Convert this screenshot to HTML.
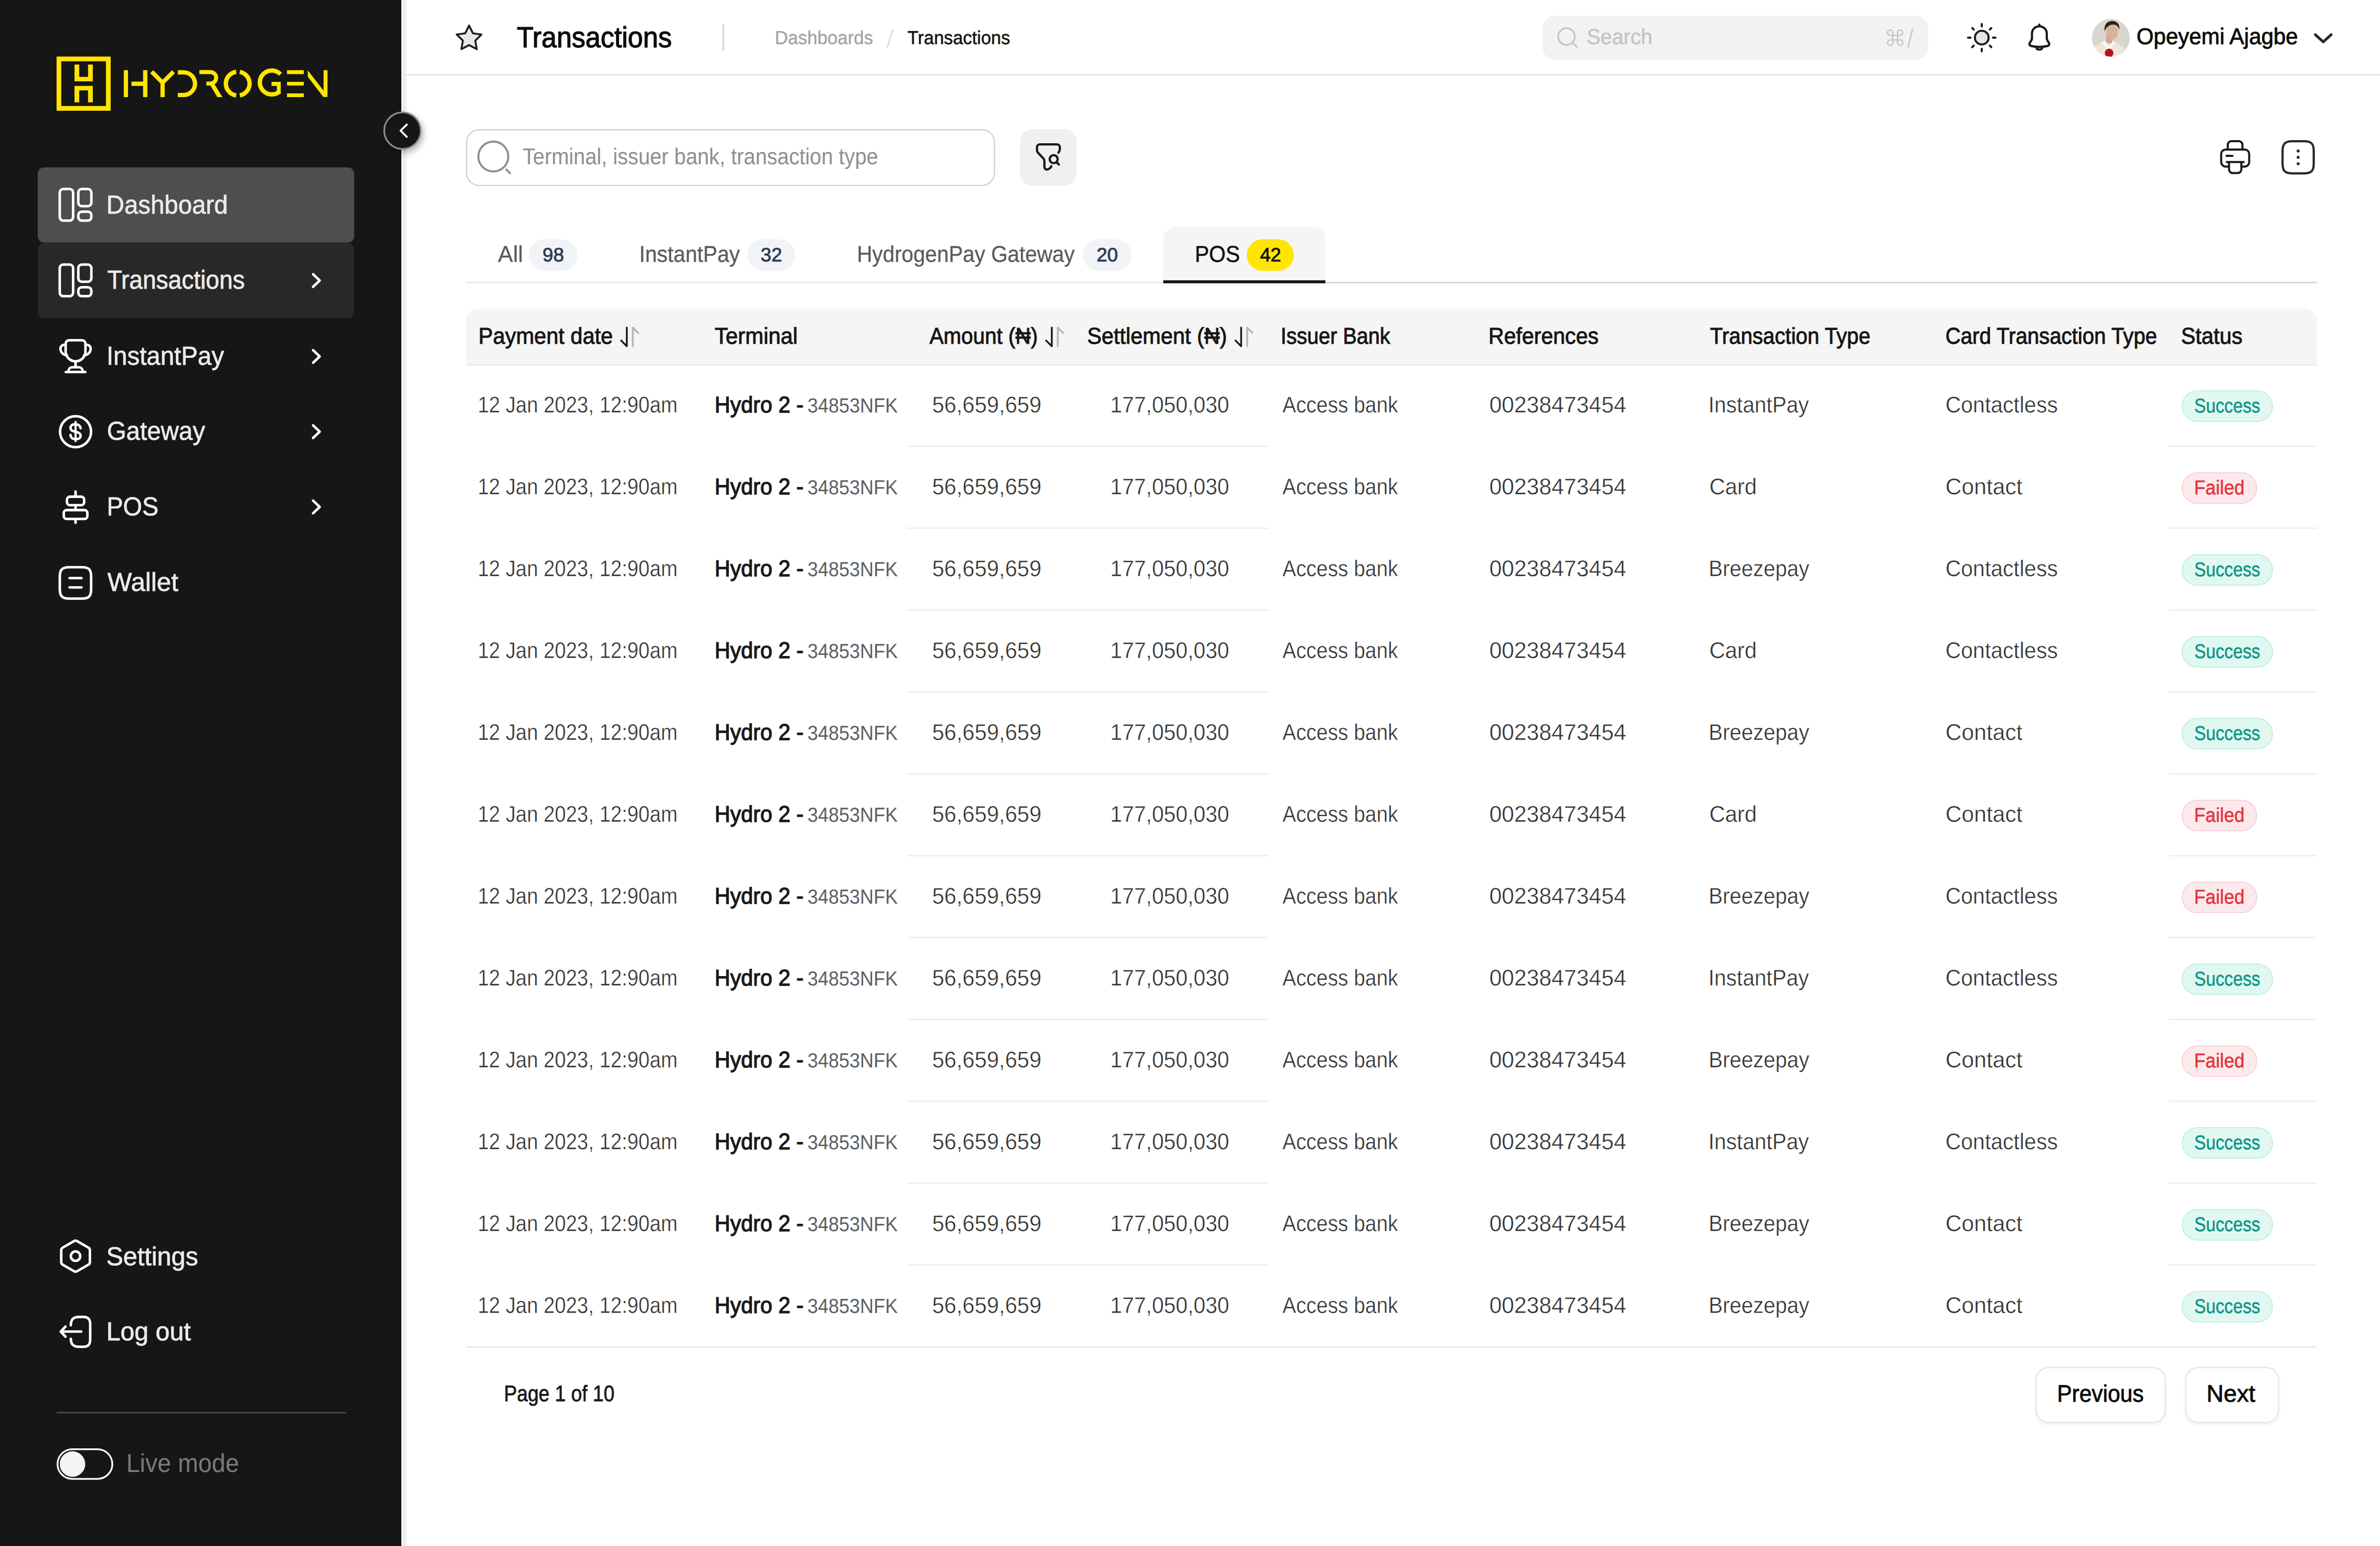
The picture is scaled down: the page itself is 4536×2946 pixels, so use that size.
<!DOCTYPE html>
<html lang="en"><head><meta charset="utf-8"><title>Transactions</title>
<style>
html,body{margin:0;padding:0;background:#ffffff;}
html,body{width:100%;height:100%;overflow:hidden;}
svg{display:block;width:100vw;height:100vh;font-family:"Liberation Sans",sans-serif;}
</style></head><body>
<svg width="4536" height="2946" viewBox="0 0 1512 982" preserveAspectRatio="none" text-rendering="geometricPrecision">
<defs>
<filter id="sh1" x="-50%" y="-50%" width="200%" height="200%"><feDropShadow dx="1.2" dy="2" stdDeviation="2" flood-color="#000" flood-opacity="0.28"/></filter>
<filter id="sh2" x="-20%" y="-50%" width="140%" height="200%"><feDropShadow dx="0" dy="1" stdDeviation="0.8" flood-color="#000" flood-opacity="0.06"/></filter>
<linearGradient id="edge" x1="0" x2="1" y1="0" y2="0"><stop offset="0" stop-color="#e4e4e4"/><stop offset="1" stop-color="#ffffff"/></linearGradient>
</defs>
<rect x="0.00" y="0.00" width="1512.00" height="982.00" fill="#ffffff"/>
<rect x="0.00" y="0.00" width="255.00" height="982.00" fill="#161616"/>
<rect x="256.00" y="0.00" width="3.20" height="982.00" fill="url(#edge)"/>
<g transform="scale(0.333333)">
<g fill="#FFE500">
<path fill-rule="evenodd" d="M107.8 107.8H210.9V210.9H107.8Z M116.8 116.8V201.9H201.9V116.8Z"/>
<path d="M142 123H151V146.4H167.8V123H176.9V155H142Z"/>
<path d="M142 163.7H176.9V194.9H167.8V172.2H151V194.9H142Z"/>
<path d="M235.9 133.8H244V185.1H235.9Z M272.7 133.8H280.9V185.1H272.7Z M250.6 155.5H272.7V163.7H250.6Z"/>
<path d="M286.3 139.5L291.9 133.8L309.85 151.8L327.8 133.8L333.5 139.5L313.9 159.1V185.1H305.8V159.1Z"/>
<path d="M338.9 133.8H350.15A25.65 25.65 0 0 1 350.15 185.1H338.9V176.9H350.15A17.45 17.45 0 0 0 350.15 142H338.9Z"/>
<path d="M380 133.6H401.15A14.75 14.75 0 0 1 409 160.8L423.9 185H414.2L401 163.1H393.3V155.4H401.15A7.05 7.05 0 0 0 401.15 141.3H380Z"/>
<path d="M547 133.8H579V141.2H547Z M547 156H579V163.1H547Z M547 177.9H579V185H547Z"/>
<path d="M586.6 134.1L616.7 172.8V133.8H624.2V184.8H616.2L586.6 146.3Z"/>
</g>
<g fill="none" stroke="#FFE500" stroke-width="8.3">
<path d="M450.2 136.84A22.65 22.65 0 0 0 450.2 181.76"/>
<path d="M457 136.99A22.65 22.65 0 0 1 457 181.61"/>
<path d="M534.6 141.5A22.8 22.8 0 1 0 531.3 175.6"/>
</g>
<path fill="#FFE500" d="M517.5 156H535V179H527.7V163.7H517.5Z"/>
</g>
<rect x="24.00" y="106.30" width="201.00" height="47.80" fill="#4e4e4e" rx="4.00"/>
<rect x="24.00" y="154.30" width="201.00" height="47.80" fill="#282828" rx="4.00"/>
<text x="67.61" y="135.50" font-size="16.50" fill="#ebebeb" stroke="#ebebeb" stroke-width="0.25" textLength="77.21" lengthAdjust="spacingAndGlyphs">Dashboard</text>
<text x="68.16" y="183.40" font-size="16.50" fill="#ebebeb" stroke="#ebebeb" stroke-width="0.25" textLength="87.39" lengthAdjust="spacingAndGlyphs">Transactions</text>
<text x="67.64" y="231.50" font-size="16.50" fill="#ebebeb" stroke="#ebebeb" stroke-width="0.25" textLength="74.69" lengthAdjust="spacingAndGlyphs">InstantPay</text>
<text x="67.90" y="279.30" font-size="16.50" fill="#ebebeb" stroke="#ebebeb" stroke-width="0.25" textLength="62.43" lengthAdjust="spacingAndGlyphs">Gateway</text>
<text x="67.82" y="327.40" font-size="16.50" fill="#ebebeb" stroke="#ebebeb" stroke-width="0.25" textLength="32.89" lengthAdjust="spacingAndGlyphs">POS</text>
<text x="68.23" y="375.20" font-size="16.50" fill="#ebebeb" stroke="#ebebeb" stroke-width="0.25" textLength="45.09" lengthAdjust="spacingAndGlyphs">Wallet</text>
<text x="67.47" y="803.60" font-size="16.50" fill="#ebebeb" stroke="#ebebeb" stroke-width="0.25" textLength="58.42" lengthAdjust="spacingAndGlyphs">Settings</text>
<text x="67.58" y="851.30" font-size="16.50" fill="#ebebeb" stroke="#ebebeb" stroke-width="0.25" textLength="53.64" lengthAdjust="spacingAndGlyphs">Log out</text>
<text x="80.23" y="935.00" font-size="16.50" fill="#7a7a7a" textLength="71.66" lengthAdjust="spacingAndGlyphs">Live mode</text>
<g fill="none" stroke="#ffffff" stroke-width="1.60" stroke-linecap="round" stroke-linejoin="round">
<rect x="37.95" y="120.05" width="8.5" height="20.1" rx="2.2"/>
<rect x="49.75" y="120.05" width="8.3" height="10.9" rx="2.2"/>
<rect x="49.75" y="134.45" width="8.3" height="5.7" rx="2.2"/>
<rect x="37.95" y="168.05" width="8.5" height="20.1" rx="2.2"/>
<rect x="49.75" y="168.05" width="8.3" height="10.9" rx="2.2"/>
<rect x="49.75" y="182.45" width="8.3" height="5.7" rx="2.2"/>
<path d="M198.9 174.20 L203.1 178.20 L198.9 182.20"/>
<path d="M198.9 222.40 L203.1 226.40 L198.9 230.40"/>
<path d="M198.9 270.20 L203.1 274.20 L198.9 278.20"/>
<path d="M198.9 318.00 L203.1 322.00 L198.9 326.00"/>
<path d="M41.7 218.3 A2.2 2.2 0 0 1 43.9 216.1 H52.1 A2.2 2.2 0 0 1 54.3 218.3 V223.2 A6.3 6.3 0 0 1 41.7 223.2 Z"/>
<path d="M41.7 219.0 C37.0 218.4 37.4 225.2 42.6 225.7"/>
<path d="M54.3 219.0 C59.0 218.4 58.6 225.2 53.4 225.7"/>
<path d="M48 229.5 V233.1"/>
<path d="M43.5 236.3 V235.6 A2.3 2.3 0 0 1 45.8 233.3 H50.2 A2.3 2.3 0 0 1 52.5 235.6 V236.3"/>
<path d="M41.8 236.3 H54.2"/>
<circle cx="48" cy="274.2" r="9.85"/>
<path d="M51.2 272.0 C51.0 270.5 49.8 269.5 48.0 269.5 H47.4 C45.8 269.5 44.8 270.5 44.8 271.8 C44.8 273.0 45.5 273.5 46.8 273.9 L49.2 274.6 C50.5 275.0 51.2 275.6 51.2 276.8 C51.2 278.1 50.2 278.9 48.7 278.9 H47.6 C45.9 278.9 44.9 277.9 44.8 276.3"/>
<path d="M48 268.0 V280.2" stroke-width="1.4"/>
<path d="M48 312.2 V314.8 M48 321.5 V323.2 M48 330.3 V332.1"/>
<rect x="42.55" y="315.5" width="10.9" height="5.4" rx="1.8"/>
<rect x="40.5" y="324.0" width="15" height="5.6" rx="1.8"/>
<path d="M44.0 360.3 H52.0 C56.4 360.3 57.9 361.8 57.9 366.2 V374.3 C57.9 378.7 56.4 380.2 52.0 380.2 H44.0 C39.6 380.2 38.0 378.7 38.0 374.3 V366.2 C38.0 361.8 39.6 360.3 44.0 360.3 Z"/>
<path d="M44.2 367.2 H51.8 M44.2 373.1 H51.8"/>
<path d="M47.1 788.3 A1.8 1.8 0 0 1 48.9 788.3 L56.2 792.5 A1.8 1.8 0 0 1 57.1 794.1 V801.7 A1.8 1.8 0 0 1 56.2 803.3 L48.9 807.5 A1.8 1.8 0 0 1 47.1 807.5 L39.8 803.3 A1.8 1.8 0 0 1 38.9 801.7 V794.1 A1.8 1.8 0 0 1 39.8 792.5 Z"/>
<circle cx="48" cy="797.9" r="3"/>
<path d="M45.0 841.8 C45.0 838.2 46.6 836.5 50.2 836.5 H53.0 C56.0 836.5 57.3 838.0 57.3 841.2 V850.8 C57.3 854.0 56.0 855.45 53.0 855.45 H50.2 C46.6 855.45 45.0 853.8 45.0 850.4"/>
<path d="M51.6 845.8 H38.7 M41.6 842.6 L38.6 845.8 L41.6 849"/>
</g>
<rect x="36.00" y="896.80" width="184.00" height="1.00" fill="#464646"/>
<rect x="36.55" y="920.55" width="34.80" height="18.80" fill="none" rx="9.40" stroke="#ffffff" stroke-width="1.10"/>
<circle cx="46.05" cy="929.95" r="8.10" fill="#f4f4f4" stroke="none" stroke-width="1.00"/>
<circle cx="255.70" cy="83.00" r="11.60" fill="#161616" stroke="#8b8b90" stroke-width="1.10" filter="url(#sh1)"/>
<path d="M258.4 79.1 L254.5 83 L258.4 86.9" fill="none" stroke="#ffffff" stroke-width="1.25" stroke-linecap="round" stroke-linejoin="round"/>
<rect x="256.00" y="47.00" width="1256.00" height="1.00" fill="#e8e8e8"/>
<path d="M298.00 16.20 L300.44 21.14 L305.89 21.94 L301.95 25.78 L302.88 31.21 L298.00 28.65 L293.12 31.21 L294.05 25.78 L290.11 21.94 L295.56 21.14 Z" fill="#e8e8e8" stroke="#1c1c1c" stroke-width="1.20" stroke-linecap="round" stroke-linejoin="round"/>
<text x="328.31" y="30.00" font-size="18.46" fill="#0d0d0d" stroke="#0d0d0d" stroke-width="0.45" textLength="98.51" lengthAdjust="spacingAndGlyphs">Transactions</text>
<rect x="459.00" y="15.50" width="1.00" height="16.80" fill="#d3d3d3"/>
<text x="492.25" y="27.90" font-size="11.92" fill="#a3a3a3" stroke="#a3a3a3" stroke-width="0.15" textLength="62.37" lengthAdjust="spacingAndGlyphs">Dashboards</text>
<line x1="567.30" y1="18.60" x2="563.60" y2="30.30" stroke="#d6d6d6" stroke-width="0.80" stroke-linecap="butt"/>
<text x="576.54" y="27.90" font-size="11.92" fill="#141414" stroke="#141414" stroke-width="0.20" textLength="65.17" lengthAdjust="spacingAndGlyphs">Transactions</text>
<rect x="980.00" y="10.00" width="245.00" height="28.00" fill="#f2f2f2" rx="8.00"/>
<circle cx="995.20" cy="23.20" r="5.30" fill="none" stroke="#c4c4c4" stroke-width="1.10"/>
<path d="M999.2 27.2 L1001.7 29.7" fill="none" stroke="#c4c4c4" stroke-width="1.10" stroke-linecap="round" stroke-linejoin="round"/>
<text x="1008.00" y="27.90" font-size="13.66" fill="#c4c4c4" stroke="#c4c4c4" stroke-width="0.20" textLength="41.75" lengthAdjust="spacingAndGlyphs">Search</text>
<path d="M1202.5 22.4 V20.73 A1.67 1.67 0 1 0 1200.83 22.4 H1207.17 A1.67 1.67 0 1 0 1205.5 20.73 V27.07 A1.67 1.67 0 1 0 1207.17 25.4 H1200.83 A1.67 1.67 0 1 0 1202.5 27.07 Z" fill="none" stroke="#c6c6c6" stroke-width="0.85" stroke-linecap="round" stroke-linejoin="round"/>
<line x1="1215.10" y1="18.40" x2="1212.00" y2="30.40" stroke="#c6c6c6" stroke-width="0.95" stroke-linecap="butt"/>
<circle cx="1259.00" cy="23.90" r="4.35" fill="#e6e6e6" stroke="#1a1a1a" stroke-width="1.30"/>
<path d="M1266.10 23.90 L1267.70 23.90 M1264.09 28.99 L1265.08 29.98 M1259.00 31.00 L1259.00 32.60 M1253.91 28.99 L1252.92 29.98 M1251.90 23.90 L1250.30 23.90 M1253.91 18.81 L1252.92 17.82 M1259.00 16.80 L1259.00 15.20 M1264.09 18.81 L1265.08 17.82" fill="none" stroke="#1a1a1a" stroke-width="1.30" stroke-linecap="round" stroke-linejoin="round"/>
<path d="M1295.6 16.7 C1293.0 16.7 1290.9 18.7 1290.9 21.3 V24.2 C1290.9 25.2 1290.5 25.9 1289.8 26.8 C1288.9 27.9 1289.2 28.9 1290.5 29.2 C1293.8 30.0 1297.4 30.0 1300.7 29.2 C1302.0 28.9 1302.3 27.9 1301.4 26.8 C1300.7 25.9 1300.3 25.2 1300.3 24.2 V21.3 C1300.3 18.7 1298.2 16.7 1295.6 16.7 Z M1295.6 15.6 V16.7 M1293.7 30.3 C1294.1 31.9 1297.1 31.9 1297.5 30.3" fill="none" stroke="#1a1a1a" stroke-width="1.40" stroke-linecap="round" stroke-linejoin="round"/>
<clipPath id="av"><circle cx="1341" cy="24" r="12"/></clipPath>
<g clip-path="url(#av)">
<rect x="1329.00" y="12.00" width="24.00" height="24.00" fill="#d8d5cf"/>
<path d="M1329 36 L1330.2 30.0 L1335.2 26.5 L1343.8 26.6 L1348.8 29.6 L1352.5 36 Z" fill="#eee6d9"/>
<path d="M1338.0 22.5 H1342.0 V27.5 H1338.0 Z" fill="#d0a890"/>
<path d="M1335.2 26.3 L1340.0 33.6 L1343.4 26.5 L1342.2 26.2 L1340.0 30.2 L1337.6 26.1 Z" fill="#fbf9f4"/>
<ellipse cx="1341.8" cy="20.2" rx="3.7" ry="5.0" fill="#d8b19b"/>
<path d="M1337.0 19.8 C1336.6 14.8 1339.3 13.3 1341.9 13.3 C1344.7 13.3 1346.8 14.9 1346.4 19.0 C1345.7 16.5 1344.2 15.5 1342.1 15.6 C1340.0 15.7 1338.3 17.2 1337.0 19.8 Z" fill="#2a201c"/>
<circle cx="1339.90" cy="33.70" r="2.75" fill="#b3151c" stroke="none" stroke-width="1.00"/>
</g>
<text x="1357.34" y="27.90" font-size="14.39" fill="#0c0c0c" stroke="#0c0c0c" stroke-width="0.30" textLength="102.57" lengthAdjust="spacingAndGlyphs">Opeyemi Ajagbe</text>
<path d="M1470.9 22.0 L1475.95 26.6 L1481.0 22.0" fill="none" stroke="#25282c" stroke-width="1.70" stroke-linecap="round" stroke-linejoin="round"/>
<rect x="296.40" y="82.40" width="335.40" height="35.40" fill="#ffffff" rx="8.00" stroke="#d2d2d2" stroke-width="0.80"/>
<circle cx="313.40" cy="99.40" r="9.50" fill="none" stroke="#8f8f8f" stroke-width="1.30"/>
<path d="M321.6 107.7 L324.0 110.0" fill="none" stroke="#8f8f8f" stroke-width="1.30" stroke-linecap="round" stroke-linejoin="round"/>
<text x="332.00" y="104.20" font-size="14.54" fill="#8e8e8e" textLength="225.88" lengthAdjust="spacingAndGlyphs">Terminal, issuer bank, transaction type</text>
<rect x="648.00" y="82.00" width="36.00" height="36.00" fill="#eff0f2" rx="8.00"/>
<path d="M667.9 105.6 C667.5 106.6 666.8 107.2 665.6 107.6 C664.5 108.0 663.5 107.2 663.5 106.0 V102.3 C663.5 101.5 663.2 101.0 662.7 100.5 L659.6 97.2 C659.1 96.7 658.8 96.1 658.8 95.3 V93.5 C658.8 92.5 659.6 91.7 660.6 91.7 H671.5 C672.5 91.7 673.3 92.5 673.3 93.5 V94.6 C673.3 95.6 673.0 96.3 672.4 97.0" fill="none" stroke="#1a1a1a" stroke-width="1.45" stroke-linecap="round" stroke-linejoin="round"/>
<circle cx="669.40" cy="101.10" r="2.55" fill="none" stroke="#1a1a1a" stroke-width="1.45"/>
<path d="M671.5 103.3 L672.7 104.5" fill="none" stroke="#1a1a1a" stroke-width="1.45" stroke-linecap="round" stroke-linejoin="round"/>
<path d="M1416.1 105.8 H1413.9 A2.8 2.8 0 0 1 1411.1 103.0 V97.8 A2.8 2.8 0 0 1 1413.9 95.0 H1426.1 A2.8 2.8 0 0 1 1428.9 97.8 V103.0 A2.8 2.8 0 0 1 1426.1 105.8 H1423.9" fill="none" stroke="#1a1a1a" stroke-width="1.32" stroke-linecap="round" stroke-linejoin="round"/>
<path d="M1415.3 95.0 V91.9 A2.2 2.2 0 0 1 1417.5 89.7 H1422.4 A2.2 2.2 0 0 1 1424.6 91.9 V95.0" fill="none" stroke="#1a1a1a" stroke-width="1.32" stroke-linecap="round" stroke-linejoin="round"/>
<path d="M1416.1 102.9 V107.7 A2.2 2.2 0 0 0 1418.3 109.9 H1421.7 A2.2 2.2 0 0 0 1423.9 107.7 V102.9" fill="none" stroke="#1a1a1a" stroke-width="1.32" stroke-linecap="round" stroke-linejoin="round"/>
<path d="M1414.7 102.9 H1425.4 M1414.5 99.0 H1418.3" fill="none" stroke="#1a1a1a" stroke-width="1.32" stroke-linecap="round" stroke-linejoin="round"/>
<path d="M1456.2 89.7 H1463.8 C1468.3 89.7 1469.9 91.3 1469.9 95.8 V104.0 C1469.9 108.5 1468.3 110.1 1463.8 110.1 H1456.2 C1451.7 110.1 1450.1 108.5 1450.1 104.0 V95.8 C1450.1 91.3 1451.7 89.7 1456.2 89.7 Z" fill="none" stroke="#25282c" stroke-width="1.40" stroke-linecap="round" stroke-linejoin="round"/>
<circle cx="1460.00" cy="95.90" r="0.95" fill="#25282c" stroke="none" stroke-width="1.00"/>
<circle cx="1460.00" cy="99.95" r="0.95" fill="#25282c" stroke="none" stroke-width="1.00"/>
<circle cx="1460.00" cy="104.00" r="0.95" fill="#25282c" stroke="none" stroke-width="1.00"/>
<rect x="296.00" y="179.00" width="443.00" height="1.00" fill="#ebebeb"/>
<rect x="842.00" y="179.00" width="630.00" height="1.00" fill="#d9d9d9"/>
<path d="M739 180 V152 A8 8 0 0 1 747 144 H834 A8 8 0 0 1 842 152 V180 Z" fill="#f5f5f5"/>
<rect x="739.00" y="178.05" width="103.00" height="1.90" fill="#151515"/>
<text x="316.37" y="166.20" font-size="14.54" fill="#5a5a5a" stroke="#5a5a5a" stroke-width="0.10" textLength="15.88" lengthAdjust="spacingAndGlyphs">All</text>
<text x="406.05" y="166.20" font-size="14.54" fill="#5a5a5a" stroke="#5a5a5a" stroke-width="0.10" textLength="63.98" lengthAdjust="spacingAndGlyphs">InstantPay</text>
<text x="544.40" y="166.20" font-size="14.54" fill="#5a5a5a" stroke="#5a5a5a" stroke-width="0.10" textLength="138.33" lengthAdjust="spacingAndGlyphs">HydrogenPay Gateway</text>
<text x="759.09" y="166.20" font-size="14.54" fill="#111111" stroke="#111111" stroke-width="0.20" textLength="28.63" lengthAdjust="spacingAndGlyphs">POS</text>
<rect x="336.00" y="152.00" width="31.00" height="20.00" fill="#f1f3f7" rx="10.00"/>
<text x="344.68" y="165.90" font-size="12.21" fill="#2b3a55" stroke="#2b3a55" stroke-width="0.30" textLength="13.60" lengthAdjust="spacingAndGlyphs">98</text>
<rect x="475.00" y="152.00" width="30.00" height="20.00" fill="#f1f3f7" rx="10.00"/>
<text x="483.29" y="165.90" font-size="12.21" fill="#2b3a55" stroke="#2b3a55" stroke-width="0.30" textLength="13.58" lengthAdjust="spacingAndGlyphs">32</text>
<rect x="688.00" y="152.00" width="31.00" height="20.00" fill="#f1f3f7" rx="10.00"/>
<text x="696.64" y="165.90" font-size="12.21" fill="#2b3a55" stroke="#2b3a55" stroke-width="0.30" textLength="13.59" lengthAdjust="spacingAndGlyphs">20</text>
<rect x="792.00" y="152.00" width="30.00" height="20.00" fill="#ffe500" rx="10.00"/>
<text x="800.47" y="165.90" font-size="12.21" fill="#111111" stroke="#111111" stroke-width="0.30" textLength="13.38" lengthAdjust="spacingAndGlyphs">42</text>
<path d="M296 232 V204 A8 8 0 0 1 304 196 H1464 A8 8 0 0 1 1472 204 V232 Z" fill="#f5f5f5"/>
<rect x="296.00" y="231.20" width="1176.00" height="1.00" fill="#eaeaea"/>
<text x="303.96" y="218.20" font-size="14.54" fill="#161616" stroke="#161616" stroke-width="0.34" textLength="85.45" lengthAdjust="spacingAndGlyphs">Payment date</text>
<text x="454.00" y="218.20" font-size="14.54" fill="#161616" stroke="#161616" stroke-width="0.34" textLength="52.81" lengthAdjust="spacingAndGlyphs">Terminal</text>
<text x="590.47" y="218.20" font-size="14.54" fill="#161616" stroke="#161616" stroke-width="0.34" textLength="68.86" lengthAdjust="spacingAndGlyphs">Amount (₦)</text>
<text x="690.67" y="218.20" font-size="14.54" fill="#161616" stroke="#161616" stroke-width="0.34" textLength="88.88" lengthAdjust="spacingAndGlyphs">Settlement (₦)</text>
<text x="813.58" y="218.20" font-size="14.54" fill="#161616" stroke="#161616" stroke-width="0.34" textLength="69.60" lengthAdjust="spacingAndGlyphs">Issuer Bank</text>
<text x="945.58" y="218.20" font-size="14.54" fill="#161616" stroke="#161616" stroke-width="0.34" textLength="70.02" lengthAdjust="spacingAndGlyphs">References</text>
<text x="1086.30" y="218.20" font-size="14.54" fill="#161616" stroke="#161616" stroke-width="0.34" textLength="101.98" lengthAdjust="spacingAndGlyphs">Transaction Type</text>
<text x="1235.93" y="218.20" font-size="14.54" fill="#161616" stroke="#161616" stroke-width="0.34" textLength="134.46" lengthAdjust="spacingAndGlyphs">Card Transaction Type</text>
<text x="1385.57" y="218.20" font-size="14.54" fill="#161616" stroke="#161616" stroke-width="0.34" textLength="39.13" lengthAdjust="spacingAndGlyphs">Status</text>
<path d="M398.20 208.1 V219.9 L394.60 216.3" fill="none" stroke="#1a1a1a" stroke-width="1.15" stroke-linecap="round" stroke-linejoin="round"/>
<path d="M402.00 219.9 V208.1 L405.40 211.5" fill="none" stroke="#b5b5b5" stroke-width="1.15" stroke-linecap="round" stroke-linejoin="round"/>
<path d="M668.20 208.1 V219.9 L664.60 216.3" fill="none" stroke="#1a1a1a" stroke-width="1.15" stroke-linecap="round" stroke-linejoin="round"/>
<path d="M672.00 219.9 V208.1 L675.40 211.5" fill="none" stroke="#b5b5b5" stroke-width="1.15" stroke-linecap="round" stroke-linejoin="round"/>
<path d="M788.50 208.1 V219.9 L784.90 216.3" fill="none" stroke="#1a1a1a" stroke-width="1.15" stroke-linecap="round" stroke-linejoin="round"/>
<path d="M792.30 219.9 V208.1 L795.70 211.5" fill="none" stroke="#b5b5b5" stroke-width="1.15" stroke-linecap="round" stroke-linejoin="round"/>
<rect x="576.00" y="283.00" width="230.00" height="1.00" fill="#f0f0f0"/>
<rect x="1378.00" y="283.00" width="94.00" height="1.00" fill="#f0f0f0"/>
<text x="303.53" y="262.00" font-size="14.46" fill="#333333" stroke="#ffffff" stroke-width="0.16" textLength="126.91" lengthAdjust="spacingAndGlyphs">12 Jan 2023, 12:90am</text>
<text x="453.97" y="262.00" font-size="14.46" fill="#1a1a1a" stroke="#1a1a1a" stroke-width="0.45" textLength="56.54" lengthAdjust="spacingAndGlyphs">Hydro 2 -</text>
<text x="513.04" y="262.00" font-size="12.94" fill="#5e5e5e" textLength="57.29" lengthAdjust="spacingAndGlyphs">34853NFK</text>
<text x="592.14" y="262.00" font-size="14.46" fill="#333333" stroke="#ffffff" stroke-width="0.16" textLength="69.51" lengthAdjust="spacingAndGlyphs">56,659,659</text>
<text x="705.36" y="262.00" font-size="14.46" fill="#333333" stroke="#ffffff" stroke-width="0.16" textLength="75.57" lengthAdjust="spacingAndGlyphs">177,050,030</text>
<text x="814.77" y="262.00" font-size="14.46" fill="#333333" stroke="#ffffff" stroke-width="0.16" textLength="73.41" lengthAdjust="spacingAndGlyphs">Access bank</text>
<text x="946.14" y="262.00" font-size="14.46" fill="#333333" stroke="#ffffff" stroke-width="0.16" textLength="87.07" lengthAdjust="spacingAndGlyphs">00238473454</text>
<text x="1085.35" y="262.00" font-size="14.46" fill="#333333" stroke="#ffffff" stroke-width="0.16" textLength="63.87" lengthAdjust="spacingAndGlyphs">InstantPay</text>
<text x="1235.91" y="262.00" font-size="14.46" fill="#333333" stroke="#ffffff" stroke-width="0.16" textLength="71.39" lengthAdjust="spacingAndGlyphs">Contactless</text>
<rect x="1386.30" y="248.30" width="57.40" height="19.40" fill="#e1f8f1" rx="9.70" stroke="#bdeedd" stroke-width="0.60"/>
<text x="1394.00" y="262.00" font-size="12.65" fill="#0e968a" stroke="#0e968a" stroke-width="0.20" textLength="41.90" lengthAdjust="spacingAndGlyphs">Success</text>
<rect x="576.00" y="335.00" width="230.00" height="1.00" fill="#f0f0f0"/>
<rect x="1378.00" y="335.00" width="94.00" height="1.00" fill="#f0f0f0"/>
<text x="303.53" y="314.00" font-size="14.46" fill="#333333" stroke="#ffffff" stroke-width="0.16" textLength="126.91" lengthAdjust="spacingAndGlyphs">12 Jan 2023, 12:90am</text>
<text x="453.97" y="314.00" font-size="14.46" fill="#1a1a1a" stroke="#1a1a1a" stroke-width="0.45" textLength="56.54" lengthAdjust="spacingAndGlyphs">Hydro 2 -</text>
<text x="513.04" y="314.00" font-size="12.94" fill="#5e5e5e" textLength="57.29" lengthAdjust="spacingAndGlyphs">34853NFK</text>
<text x="592.14" y="314.00" font-size="14.46" fill="#333333" stroke="#ffffff" stroke-width="0.16" textLength="69.51" lengthAdjust="spacingAndGlyphs">56,659,659</text>
<text x="705.36" y="314.00" font-size="14.46" fill="#333333" stroke="#ffffff" stroke-width="0.16" textLength="75.57" lengthAdjust="spacingAndGlyphs">177,050,030</text>
<text x="814.77" y="314.00" font-size="14.46" fill="#333333" stroke="#ffffff" stroke-width="0.16" textLength="73.41" lengthAdjust="spacingAndGlyphs">Access bank</text>
<text x="946.14" y="314.00" font-size="14.46" fill="#333333" stroke="#ffffff" stroke-width="0.16" textLength="87.07" lengthAdjust="spacingAndGlyphs">00238473454</text>
<text x="1085.89" y="314.00" font-size="14.46" fill="#333333" stroke="#ffffff" stroke-width="0.16" textLength="30.21" lengthAdjust="spacingAndGlyphs">Card</text>
<text x="1235.88" y="314.00" font-size="14.46" fill="#333333" stroke="#ffffff" stroke-width="0.16" textLength="49.03" lengthAdjust="spacingAndGlyphs">Contact</text>
<rect x="1386.30" y="300.30" width="47.40" height="19.40" fill="#fce9eb" rx="9.70" stroke="#f7cfd3" stroke-width="0.60"/>
<text x="1393.94" y="314.00" font-size="12.65" fill="#e3343f" stroke="#e3343f" stroke-width="0.20" textLength="32.02" lengthAdjust="spacingAndGlyphs">Failed</text>
<rect x="576.00" y="387.00" width="230.00" height="1.00" fill="#f0f0f0"/>
<rect x="1378.00" y="387.00" width="94.00" height="1.00" fill="#f0f0f0"/>
<text x="303.53" y="366.00" font-size="14.46" fill="#333333" stroke="#ffffff" stroke-width="0.16" textLength="126.91" lengthAdjust="spacingAndGlyphs">12 Jan 2023, 12:90am</text>
<text x="453.97" y="366.00" font-size="14.46" fill="#1a1a1a" stroke="#1a1a1a" stroke-width="0.45" textLength="56.54" lengthAdjust="spacingAndGlyphs">Hydro 2 -</text>
<text x="513.04" y="366.00" font-size="12.94" fill="#5e5e5e" textLength="57.29" lengthAdjust="spacingAndGlyphs">34853NFK</text>
<text x="592.14" y="366.00" font-size="14.46" fill="#333333" stroke="#ffffff" stroke-width="0.16" textLength="69.51" lengthAdjust="spacingAndGlyphs">56,659,659</text>
<text x="705.36" y="366.00" font-size="14.46" fill="#333333" stroke="#ffffff" stroke-width="0.16" textLength="75.57" lengthAdjust="spacingAndGlyphs">177,050,030</text>
<text x="814.77" y="366.00" font-size="14.46" fill="#333333" stroke="#ffffff" stroke-width="0.16" textLength="73.41" lengthAdjust="spacingAndGlyphs">Access bank</text>
<text x="946.14" y="366.00" font-size="14.46" fill="#333333" stroke="#ffffff" stroke-width="0.16" textLength="87.07" lengthAdjust="spacingAndGlyphs">00238473454</text>
<text x="1085.50" y="366.00" font-size="14.46" fill="#333333" stroke="#ffffff" stroke-width="0.16" textLength="63.92" lengthAdjust="spacingAndGlyphs">Breezepay</text>
<text x="1235.91" y="366.00" font-size="14.46" fill="#333333" stroke="#ffffff" stroke-width="0.16" textLength="71.39" lengthAdjust="spacingAndGlyphs">Contactless</text>
<rect x="1386.30" y="352.30" width="57.40" height="19.40" fill="#e1f8f1" rx="9.70" stroke="#bdeedd" stroke-width="0.60"/>
<text x="1394.00" y="366.00" font-size="12.65" fill="#0e968a" stroke="#0e968a" stroke-width="0.20" textLength="41.90" lengthAdjust="spacingAndGlyphs">Success</text>
<rect x="576.00" y="439.00" width="230.00" height="1.00" fill="#f0f0f0"/>
<rect x="1378.00" y="439.00" width="94.00" height="1.00" fill="#f0f0f0"/>
<text x="303.53" y="418.00" font-size="14.46" fill="#333333" stroke="#ffffff" stroke-width="0.16" textLength="126.91" lengthAdjust="spacingAndGlyphs">12 Jan 2023, 12:90am</text>
<text x="453.97" y="418.00" font-size="14.46" fill="#1a1a1a" stroke="#1a1a1a" stroke-width="0.45" textLength="56.54" lengthAdjust="spacingAndGlyphs">Hydro 2 -</text>
<text x="513.04" y="418.00" font-size="12.94" fill="#5e5e5e" textLength="57.29" lengthAdjust="spacingAndGlyphs">34853NFK</text>
<text x="592.14" y="418.00" font-size="14.46" fill="#333333" stroke="#ffffff" stroke-width="0.16" textLength="69.51" lengthAdjust="spacingAndGlyphs">56,659,659</text>
<text x="705.36" y="418.00" font-size="14.46" fill="#333333" stroke="#ffffff" stroke-width="0.16" textLength="75.57" lengthAdjust="spacingAndGlyphs">177,050,030</text>
<text x="814.77" y="418.00" font-size="14.46" fill="#333333" stroke="#ffffff" stroke-width="0.16" textLength="73.41" lengthAdjust="spacingAndGlyphs">Access bank</text>
<text x="946.14" y="418.00" font-size="14.46" fill="#333333" stroke="#ffffff" stroke-width="0.16" textLength="87.07" lengthAdjust="spacingAndGlyphs">00238473454</text>
<text x="1085.89" y="418.00" font-size="14.46" fill="#333333" stroke="#ffffff" stroke-width="0.16" textLength="30.21" lengthAdjust="spacingAndGlyphs">Card</text>
<text x="1235.91" y="418.00" font-size="14.46" fill="#333333" stroke="#ffffff" stroke-width="0.16" textLength="71.39" lengthAdjust="spacingAndGlyphs">Contactless</text>
<rect x="1386.30" y="404.30" width="57.40" height="19.40" fill="#e1f8f1" rx="9.70" stroke="#bdeedd" stroke-width="0.60"/>
<text x="1394.00" y="418.00" font-size="12.65" fill="#0e968a" stroke="#0e968a" stroke-width="0.20" textLength="41.90" lengthAdjust="spacingAndGlyphs">Success</text>
<rect x="576.00" y="491.00" width="230.00" height="1.00" fill="#f0f0f0"/>
<rect x="1378.00" y="491.00" width="94.00" height="1.00" fill="#f0f0f0"/>
<text x="303.53" y="470.00" font-size="14.46" fill="#333333" stroke="#ffffff" stroke-width="0.16" textLength="126.91" lengthAdjust="spacingAndGlyphs">12 Jan 2023, 12:90am</text>
<text x="453.97" y="470.00" font-size="14.46" fill="#1a1a1a" stroke="#1a1a1a" stroke-width="0.45" textLength="56.54" lengthAdjust="spacingAndGlyphs">Hydro 2 -</text>
<text x="513.04" y="470.00" font-size="12.94" fill="#5e5e5e" textLength="57.29" lengthAdjust="spacingAndGlyphs">34853NFK</text>
<text x="592.14" y="470.00" font-size="14.46" fill="#333333" stroke="#ffffff" stroke-width="0.16" textLength="69.51" lengthAdjust="spacingAndGlyphs">56,659,659</text>
<text x="705.36" y="470.00" font-size="14.46" fill="#333333" stroke="#ffffff" stroke-width="0.16" textLength="75.57" lengthAdjust="spacingAndGlyphs">177,050,030</text>
<text x="814.77" y="470.00" font-size="14.46" fill="#333333" stroke="#ffffff" stroke-width="0.16" textLength="73.41" lengthAdjust="spacingAndGlyphs">Access bank</text>
<text x="946.14" y="470.00" font-size="14.46" fill="#333333" stroke="#ffffff" stroke-width="0.16" textLength="87.07" lengthAdjust="spacingAndGlyphs">00238473454</text>
<text x="1085.50" y="470.00" font-size="14.46" fill="#333333" stroke="#ffffff" stroke-width="0.16" textLength="63.92" lengthAdjust="spacingAndGlyphs">Breezepay</text>
<text x="1235.88" y="470.00" font-size="14.46" fill="#333333" stroke="#ffffff" stroke-width="0.16" textLength="49.03" lengthAdjust="spacingAndGlyphs">Contact</text>
<rect x="1386.30" y="456.30" width="57.40" height="19.40" fill="#e1f8f1" rx="9.70" stroke="#bdeedd" stroke-width="0.60"/>
<text x="1394.00" y="470.00" font-size="12.65" fill="#0e968a" stroke="#0e968a" stroke-width="0.20" textLength="41.90" lengthAdjust="spacingAndGlyphs">Success</text>
<rect x="576.00" y="543.00" width="230.00" height="1.00" fill="#f0f0f0"/>
<rect x="1378.00" y="543.00" width="94.00" height="1.00" fill="#f0f0f0"/>
<text x="303.53" y="522.00" font-size="14.46" fill="#333333" stroke="#ffffff" stroke-width="0.16" textLength="126.91" lengthAdjust="spacingAndGlyphs">12 Jan 2023, 12:90am</text>
<text x="453.97" y="522.00" font-size="14.46" fill="#1a1a1a" stroke="#1a1a1a" stroke-width="0.45" textLength="56.54" lengthAdjust="spacingAndGlyphs">Hydro 2 -</text>
<text x="513.04" y="522.00" font-size="12.94" fill="#5e5e5e" textLength="57.29" lengthAdjust="spacingAndGlyphs">34853NFK</text>
<text x="592.14" y="522.00" font-size="14.46" fill="#333333" stroke="#ffffff" stroke-width="0.16" textLength="69.51" lengthAdjust="spacingAndGlyphs">56,659,659</text>
<text x="705.36" y="522.00" font-size="14.46" fill="#333333" stroke="#ffffff" stroke-width="0.16" textLength="75.57" lengthAdjust="spacingAndGlyphs">177,050,030</text>
<text x="814.77" y="522.00" font-size="14.46" fill="#333333" stroke="#ffffff" stroke-width="0.16" textLength="73.41" lengthAdjust="spacingAndGlyphs">Access bank</text>
<text x="946.14" y="522.00" font-size="14.46" fill="#333333" stroke="#ffffff" stroke-width="0.16" textLength="87.07" lengthAdjust="spacingAndGlyphs">00238473454</text>
<text x="1085.89" y="522.00" font-size="14.46" fill="#333333" stroke="#ffffff" stroke-width="0.16" textLength="30.21" lengthAdjust="spacingAndGlyphs">Card</text>
<text x="1235.88" y="522.00" font-size="14.46" fill="#333333" stroke="#ffffff" stroke-width="0.16" textLength="49.03" lengthAdjust="spacingAndGlyphs">Contact</text>
<rect x="1386.30" y="508.30" width="47.40" height="19.40" fill="#fce9eb" rx="9.70" stroke="#f7cfd3" stroke-width="0.60"/>
<text x="1393.94" y="522.00" font-size="12.65" fill="#e3343f" stroke="#e3343f" stroke-width="0.20" textLength="32.02" lengthAdjust="spacingAndGlyphs">Failed</text>
<rect x="576.00" y="595.00" width="230.00" height="1.00" fill="#f0f0f0"/>
<rect x="1378.00" y="595.00" width="94.00" height="1.00" fill="#f0f0f0"/>
<text x="303.53" y="574.00" font-size="14.46" fill="#333333" stroke="#ffffff" stroke-width="0.16" textLength="126.91" lengthAdjust="spacingAndGlyphs">12 Jan 2023, 12:90am</text>
<text x="453.97" y="574.00" font-size="14.46" fill="#1a1a1a" stroke="#1a1a1a" stroke-width="0.45" textLength="56.54" lengthAdjust="spacingAndGlyphs">Hydro 2 -</text>
<text x="513.04" y="574.00" font-size="12.94" fill="#5e5e5e" textLength="57.29" lengthAdjust="spacingAndGlyphs">34853NFK</text>
<text x="592.14" y="574.00" font-size="14.46" fill="#333333" stroke="#ffffff" stroke-width="0.16" textLength="69.51" lengthAdjust="spacingAndGlyphs">56,659,659</text>
<text x="705.36" y="574.00" font-size="14.46" fill="#333333" stroke="#ffffff" stroke-width="0.16" textLength="75.57" lengthAdjust="spacingAndGlyphs">177,050,030</text>
<text x="814.77" y="574.00" font-size="14.46" fill="#333333" stroke="#ffffff" stroke-width="0.16" textLength="73.41" lengthAdjust="spacingAndGlyphs">Access bank</text>
<text x="946.14" y="574.00" font-size="14.46" fill="#333333" stroke="#ffffff" stroke-width="0.16" textLength="87.07" lengthAdjust="spacingAndGlyphs">00238473454</text>
<text x="1085.50" y="574.00" font-size="14.46" fill="#333333" stroke="#ffffff" stroke-width="0.16" textLength="63.92" lengthAdjust="spacingAndGlyphs">Breezepay</text>
<text x="1235.91" y="574.00" font-size="14.46" fill="#333333" stroke="#ffffff" stroke-width="0.16" textLength="71.39" lengthAdjust="spacingAndGlyphs">Contactless</text>
<rect x="1386.30" y="560.30" width="47.40" height="19.40" fill="#fce9eb" rx="9.70" stroke="#f7cfd3" stroke-width="0.60"/>
<text x="1393.94" y="574.00" font-size="12.65" fill="#e3343f" stroke="#e3343f" stroke-width="0.20" textLength="32.02" lengthAdjust="spacingAndGlyphs">Failed</text>
<rect x="576.00" y="647.00" width="230.00" height="1.00" fill="#f0f0f0"/>
<rect x="1378.00" y="647.00" width="94.00" height="1.00" fill="#f0f0f0"/>
<text x="303.53" y="626.00" font-size="14.46" fill="#333333" stroke="#ffffff" stroke-width="0.16" textLength="126.91" lengthAdjust="spacingAndGlyphs">12 Jan 2023, 12:90am</text>
<text x="453.97" y="626.00" font-size="14.46" fill="#1a1a1a" stroke="#1a1a1a" stroke-width="0.45" textLength="56.54" lengthAdjust="spacingAndGlyphs">Hydro 2 -</text>
<text x="513.04" y="626.00" font-size="12.94" fill="#5e5e5e" textLength="57.29" lengthAdjust="spacingAndGlyphs">34853NFK</text>
<text x="592.14" y="626.00" font-size="14.46" fill="#333333" stroke="#ffffff" stroke-width="0.16" textLength="69.51" lengthAdjust="spacingAndGlyphs">56,659,659</text>
<text x="705.36" y="626.00" font-size="14.46" fill="#333333" stroke="#ffffff" stroke-width="0.16" textLength="75.57" lengthAdjust="spacingAndGlyphs">177,050,030</text>
<text x="814.77" y="626.00" font-size="14.46" fill="#333333" stroke="#ffffff" stroke-width="0.16" textLength="73.41" lengthAdjust="spacingAndGlyphs">Access bank</text>
<text x="946.14" y="626.00" font-size="14.46" fill="#333333" stroke="#ffffff" stroke-width="0.16" textLength="87.07" lengthAdjust="spacingAndGlyphs">00238473454</text>
<text x="1085.35" y="626.00" font-size="14.46" fill="#333333" stroke="#ffffff" stroke-width="0.16" textLength="63.87" lengthAdjust="spacingAndGlyphs">InstantPay</text>
<text x="1235.91" y="626.00" font-size="14.46" fill="#333333" stroke="#ffffff" stroke-width="0.16" textLength="71.39" lengthAdjust="spacingAndGlyphs">Contactless</text>
<rect x="1386.30" y="612.30" width="57.40" height="19.40" fill="#e1f8f1" rx="9.70" stroke="#bdeedd" stroke-width="0.60"/>
<text x="1394.00" y="626.00" font-size="12.65" fill="#0e968a" stroke="#0e968a" stroke-width="0.20" textLength="41.90" lengthAdjust="spacingAndGlyphs">Success</text>
<rect x="576.00" y="699.00" width="230.00" height="1.00" fill="#f0f0f0"/>
<rect x="1378.00" y="699.00" width="94.00" height="1.00" fill="#f0f0f0"/>
<text x="303.53" y="678.00" font-size="14.46" fill="#333333" stroke="#ffffff" stroke-width="0.16" textLength="126.91" lengthAdjust="spacingAndGlyphs">12 Jan 2023, 12:90am</text>
<text x="453.97" y="678.00" font-size="14.46" fill="#1a1a1a" stroke="#1a1a1a" stroke-width="0.45" textLength="56.54" lengthAdjust="spacingAndGlyphs">Hydro 2 -</text>
<text x="513.04" y="678.00" font-size="12.94" fill="#5e5e5e" textLength="57.29" lengthAdjust="spacingAndGlyphs">34853NFK</text>
<text x="592.14" y="678.00" font-size="14.46" fill="#333333" stroke="#ffffff" stroke-width="0.16" textLength="69.51" lengthAdjust="spacingAndGlyphs">56,659,659</text>
<text x="705.36" y="678.00" font-size="14.46" fill="#333333" stroke="#ffffff" stroke-width="0.16" textLength="75.57" lengthAdjust="spacingAndGlyphs">177,050,030</text>
<text x="814.77" y="678.00" font-size="14.46" fill="#333333" stroke="#ffffff" stroke-width="0.16" textLength="73.41" lengthAdjust="spacingAndGlyphs">Access bank</text>
<text x="946.14" y="678.00" font-size="14.46" fill="#333333" stroke="#ffffff" stroke-width="0.16" textLength="87.07" lengthAdjust="spacingAndGlyphs">00238473454</text>
<text x="1085.50" y="678.00" font-size="14.46" fill="#333333" stroke="#ffffff" stroke-width="0.16" textLength="63.92" lengthAdjust="spacingAndGlyphs">Breezepay</text>
<text x="1235.88" y="678.00" font-size="14.46" fill="#333333" stroke="#ffffff" stroke-width="0.16" textLength="49.03" lengthAdjust="spacingAndGlyphs">Contact</text>
<rect x="1386.30" y="664.30" width="47.40" height="19.40" fill="#fce9eb" rx="9.70" stroke="#f7cfd3" stroke-width="0.60"/>
<text x="1393.94" y="678.00" font-size="12.65" fill="#e3343f" stroke="#e3343f" stroke-width="0.20" textLength="32.02" lengthAdjust="spacingAndGlyphs">Failed</text>
<rect x="576.00" y="751.00" width="230.00" height="1.00" fill="#f0f0f0"/>
<rect x="1378.00" y="751.00" width="94.00" height="1.00" fill="#f0f0f0"/>
<text x="303.53" y="730.00" font-size="14.46" fill="#333333" stroke="#ffffff" stroke-width="0.16" textLength="126.91" lengthAdjust="spacingAndGlyphs">12 Jan 2023, 12:90am</text>
<text x="453.97" y="730.00" font-size="14.46" fill="#1a1a1a" stroke="#1a1a1a" stroke-width="0.45" textLength="56.54" lengthAdjust="spacingAndGlyphs">Hydro 2 -</text>
<text x="513.04" y="730.00" font-size="12.94" fill="#5e5e5e" textLength="57.29" lengthAdjust="spacingAndGlyphs">34853NFK</text>
<text x="592.14" y="730.00" font-size="14.46" fill="#333333" stroke="#ffffff" stroke-width="0.16" textLength="69.51" lengthAdjust="spacingAndGlyphs">56,659,659</text>
<text x="705.36" y="730.00" font-size="14.46" fill="#333333" stroke="#ffffff" stroke-width="0.16" textLength="75.57" lengthAdjust="spacingAndGlyphs">177,050,030</text>
<text x="814.77" y="730.00" font-size="14.46" fill="#333333" stroke="#ffffff" stroke-width="0.16" textLength="73.41" lengthAdjust="spacingAndGlyphs">Access bank</text>
<text x="946.14" y="730.00" font-size="14.46" fill="#333333" stroke="#ffffff" stroke-width="0.16" textLength="87.07" lengthAdjust="spacingAndGlyphs">00238473454</text>
<text x="1085.35" y="730.00" font-size="14.46" fill="#333333" stroke="#ffffff" stroke-width="0.16" textLength="63.87" lengthAdjust="spacingAndGlyphs">InstantPay</text>
<text x="1235.91" y="730.00" font-size="14.46" fill="#333333" stroke="#ffffff" stroke-width="0.16" textLength="71.39" lengthAdjust="spacingAndGlyphs">Contactless</text>
<rect x="1386.30" y="716.30" width="57.40" height="19.40" fill="#e1f8f1" rx="9.70" stroke="#bdeedd" stroke-width="0.60"/>
<text x="1394.00" y="730.00" font-size="12.65" fill="#0e968a" stroke="#0e968a" stroke-width="0.20" textLength="41.90" lengthAdjust="spacingAndGlyphs">Success</text>
<rect x="576.00" y="803.00" width="230.00" height="1.00" fill="#f0f0f0"/>
<rect x="1378.00" y="803.00" width="94.00" height="1.00" fill="#f0f0f0"/>
<text x="303.53" y="782.00" font-size="14.46" fill="#333333" stroke="#ffffff" stroke-width="0.16" textLength="126.91" lengthAdjust="spacingAndGlyphs">12 Jan 2023, 12:90am</text>
<text x="453.97" y="782.00" font-size="14.46" fill="#1a1a1a" stroke="#1a1a1a" stroke-width="0.45" textLength="56.54" lengthAdjust="spacingAndGlyphs">Hydro 2 -</text>
<text x="513.04" y="782.00" font-size="12.94" fill="#5e5e5e" textLength="57.29" lengthAdjust="spacingAndGlyphs">34853NFK</text>
<text x="592.14" y="782.00" font-size="14.46" fill="#333333" stroke="#ffffff" stroke-width="0.16" textLength="69.51" lengthAdjust="spacingAndGlyphs">56,659,659</text>
<text x="705.36" y="782.00" font-size="14.46" fill="#333333" stroke="#ffffff" stroke-width="0.16" textLength="75.57" lengthAdjust="spacingAndGlyphs">177,050,030</text>
<text x="814.77" y="782.00" font-size="14.46" fill="#333333" stroke="#ffffff" stroke-width="0.16" textLength="73.41" lengthAdjust="spacingAndGlyphs">Access bank</text>
<text x="946.14" y="782.00" font-size="14.46" fill="#333333" stroke="#ffffff" stroke-width="0.16" textLength="87.07" lengthAdjust="spacingAndGlyphs">00238473454</text>
<text x="1085.50" y="782.00" font-size="14.46" fill="#333333" stroke="#ffffff" stroke-width="0.16" textLength="63.92" lengthAdjust="spacingAndGlyphs">Breezepay</text>
<text x="1235.88" y="782.00" font-size="14.46" fill="#333333" stroke="#ffffff" stroke-width="0.16" textLength="49.03" lengthAdjust="spacingAndGlyphs">Contact</text>
<rect x="1386.30" y="768.30" width="57.40" height="19.40" fill="#e1f8f1" rx="9.70" stroke="#bdeedd" stroke-width="0.60"/>
<text x="1394.00" y="782.00" font-size="12.65" fill="#0e968a" stroke="#0e968a" stroke-width="0.20" textLength="41.90" lengthAdjust="spacingAndGlyphs">Success</text>
<text x="303.53" y="834.00" font-size="14.46" fill="#333333" stroke="#ffffff" stroke-width="0.16" textLength="126.91" lengthAdjust="spacingAndGlyphs">12 Jan 2023, 12:90am</text>
<text x="453.97" y="834.00" font-size="14.46" fill="#1a1a1a" stroke="#1a1a1a" stroke-width="0.45" textLength="56.54" lengthAdjust="spacingAndGlyphs">Hydro 2 -</text>
<text x="513.04" y="834.00" font-size="12.94" fill="#5e5e5e" textLength="57.29" lengthAdjust="spacingAndGlyphs">34853NFK</text>
<text x="592.14" y="834.00" font-size="14.46" fill="#333333" stroke="#ffffff" stroke-width="0.16" textLength="69.51" lengthAdjust="spacingAndGlyphs">56,659,659</text>
<text x="705.36" y="834.00" font-size="14.46" fill="#333333" stroke="#ffffff" stroke-width="0.16" textLength="75.57" lengthAdjust="spacingAndGlyphs">177,050,030</text>
<text x="814.77" y="834.00" font-size="14.46" fill="#333333" stroke="#ffffff" stroke-width="0.16" textLength="73.41" lengthAdjust="spacingAndGlyphs">Access bank</text>
<text x="946.14" y="834.00" font-size="14.46" fill="#333333" stroke="#ffffff" stroke-width="0.16" textLength="87.07" lengthAdjust="spacingAndGlyphs">00238473454</text>
<text x="1085.50" y="834.00" font-size="14.46" fill="#333333" stroke="#ffffff" stroke-width="0.16" textLength="63.92" lengthAdjust="spacingAndGlyphs">Breezepay</text>
<text x="1235.88" y="834.00" font-size="14.46" fill="#333333" stroke="#ffffff" stroke-width="0.16" textLength="49.03" lengthAdjust="spacingAndGlyphs">Contact</text>
<rect x="1386.30" y="820.30" width="57.40" height="19.40" fill="#e1f8f1" rx="9.70" stroke="#bdeedd" stroke-width="0.60"/>
<text x="1394.00" y="834.00" font-size="12.65" fill="#0e968a" stroke="#0e968a" stroke-width="0.20" textLength="41.90" lengthAdjust="spacingAndGlyphs">Success</text>
<rect x="296.00" y="855.00" width="1176.00" height="1.00" fill="#ebebeb"/>
<text x="320.18" y="889.90" font-size="14.24" fill="#1a1a1a" stroke="#1a1a1a" stroke-width="0.30" textLength="70.20" lengthAdjust="spacingAndGlyphs">Page 1 of 10</text>
<rect x="1293.60" y="868.60" width="82.00" height="35.00" fill="#ffffff" rx="8.00" stroke="#e8e8e8" stroke-width="0.90" filter="url(#sh2)"/>
<rect x="1388.60" y="868.60" width="59.00" height="35.00" fill="#ffffff" rx="8.00" stroke="#e8e8e8" stroke-width="0.90" filter="url(#sh2)"/>
<text x="1306.84" y="890.40" font-size="15.12" fill="#0c0c0c" stroke="#0c0c0c" stroke-width="0.30" textLength="55.07" lengthAdjust="spacingAndGlyphs">Previous</text>
<text x="1401.76" y="890.40" font-size="15.12" fill="#0c0c0c" stroke="#0c0c0c" stroke-width="0.30" textLength="31.05" lengthAdjust="spacingAndGlyphs">Next</text>
</svg>
</body></html>
